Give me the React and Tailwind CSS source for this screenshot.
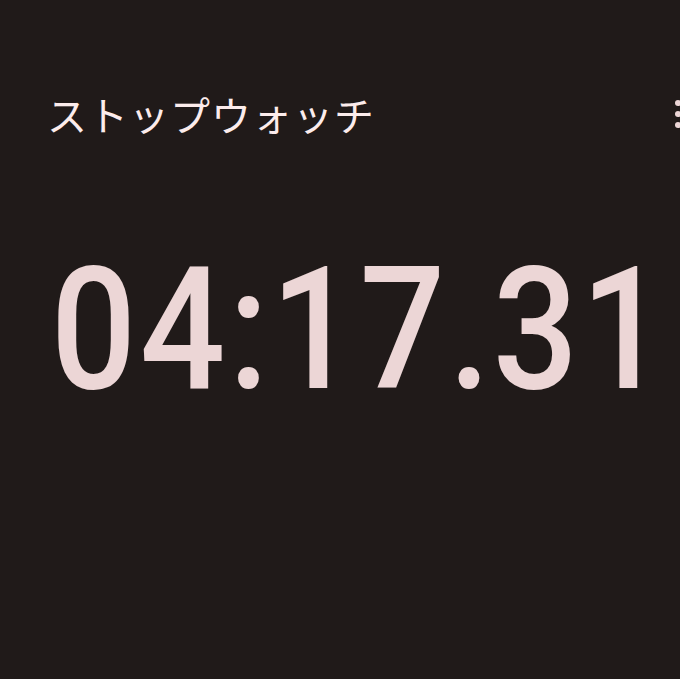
import React from "react";

const cells = [
  { c: "0", w: "w-[88px]" },
  { c: "4", w: "w-[90px]" },
  { c: ":", w: "w-[42px]" },
  { c: "1", w: "w-[88px]" },
  { c: "7", w: "w-[90px]" },
  { c: ".", w: "w-[44px]" },
  { c: "3", w: "w-[88px]" },
  { c: "1", w: "w-[88px]" },
];

export default function App() {
  return (
    <div className="w-[680px] h-[679px] overflow-hidden bg-[#201a19] flex flex-col">
      <div className="flex items-center pt-[85px] pl-[47px]">
        <div
          className="text-[40px] leading-[58px] tracking-[1px] text-[#fcecec] whitespace-nowrap"
          style={{ fontFamily: '"Noto Sans CJK JP", "Noto Sans", sans-serif' }}
        >
          ストップウォッチ
        </div>
        <div className="ml-auto mr-[-1px] flex flex-col gap-[5px]">
          <div className="w-[6px] h-[6px] rounded-full bg-[#ecd6d6]" />
          <div className="w-[6px] h-[6px] rounded-full bg-[#ecd6d6]" />
          <div className="w-[6px] h-[6px] rounded-full bg-[#ecd6d6]" />
        </div>
      </div>
      <div
        className="flex mt-[101px] pl-[50px] text-[171px] font-medium leading-none text-[#ecd6d6] whitespace-nowrap"
        style={{ fontFamily: 'Roboto, "Liberation Sans", sans-serif' }}
      >
        {cells.map((x, i) => (
          <span key={i} className={`${x.w} shrink-0 flex justify-center`}>
            <span className="inline-block scale-x-[0.88]">{x.c}</span>
          </span>
        ))}
      </div>
    </div>
  );
}
